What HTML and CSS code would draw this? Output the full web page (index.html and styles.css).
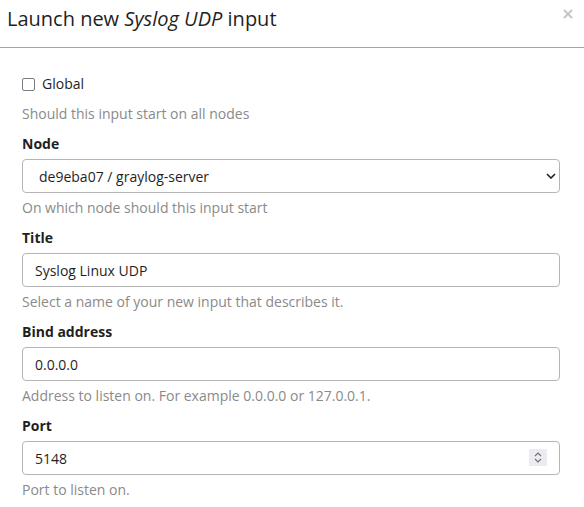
FILE: index.html
```html
<!DOCTYPE html>
<html>
<head>
<meta charset="utf-8">
<link rel="stylesheet" href="styles.css">
</head>
<body>
<div class="modal">
  <div class="modal-header">
    <h2 class="modal-title">Launch new <em>Syslog UDP</em> input</h2>
    <button class="close" type="button" aria-label="Close">
      <svg width="10" height="10" viewBox="0 0 10 10"><path d="M1 1L9 9M9 1L1 9" stroke="#c8c8c8" stroke-width="2.2" stroke-linecap="butt"/></svg>
    </button>
  </div>
  <div class="modal-body">
    <div class="field">
      <label class="check-row"><span class="checkbox"></span><span>Global</span></label>
      <div class="help">Should this input start on all nodes</div>
    </div>
    <div class="field">
      <label class="label">Node</label>
      <div class="control-wrap">
        <select class="control select"><option>de9eba07 / graylog-server</option></select>
        <svg class="chevron" width="10" height="6" viewBox="0 0 10 6"><path d="M1 1L5 5L9 1" fill="none" stroke="#222" stroke-width="1.6"/></svg>
      </div>
      <div class="help">On which node should this input start</div>
    </div>
    <div class="field">
      <label class="label">Title</label>
      <input class="control" type="text" value="Syslog Linux UDP">
      <div class="help">Select a name of your new input that describes it.</div>
    </div>
    <div class="field">
      <label class="label">Bind address</label>
      <input class="control" type="text" value="0.0.0.0">
      <div class="help">Address to listen on. For example 0.0.0.0 or 127.0.0.1.</div>
    </div>
    <div class="field">
      <label class="label">Port</label>
      <div class="control-wrap">
        <input class="control" type="text" value="5148">
        <span class="spinner">
          <svg width="18" height="17" viewBox="0 0 18 17"><path d="M6 7L9 4L12 7" fill="none" stroke="#6e6e78" stroke-width="1.1"/><path d="M6 10L9 13L12 10" fill="none" stroke="#6e6e78" stroke-width="1.1"/></svg>
        </span>
      </div>
      <div class="help">Port to listen on.</div>
    </div>
  </div>
</div>
</body>
</html>
```
FILE: styles.css
```css
html, body {
  margin: 0;
  padding: 0;
  background: #fff;
}
body {
  font-family: "Open Sans", "Noto Sans", sans-serif;
  font-size: 14px;
  color: #1f1f1f;
}
.modal {
  width: 584px;
}
.modal-header {
  display: flex;
  justify-content: space-between;
  align-items: flex-start;
  height: 47px;
  border-bottom: 1px solid #a5a5a5;
  padding: 0 11px 0 7px;
}
.modal-title {
  margin: 0;
  padding-top: 5px;
  font-size: 20px;
  line-height: 28px;
  font-weight: 400;
  color: #1f1f1f;
}
.modal-title em {
  font-style: italic;
}
.close {
  background: none;
  border: 0;
  padding: 0;
  margin-top: 9px;
  width: 10px;
  height: 10px;
  display: flex;
  cursor: pointer;
}
.modal-body {
  padding: 26px 24px 0 22px;
}
.field {
  display: flex;
  flex-direction: column;
  margin-bottom: 10px;
}
.check-row {
  display: flex;
  align-items: center;
  gap: 7px;
  height: 20px;
  margin-bottom: 10px;
  line-height: 20px;
}
.checkbox {
  box-sizing: border-box;
  width: 13px;
  height: 13px;
  border: 1.5px solid #7a7a86;
  border-radius: 2px;
  background: #fff;
}
.label {
  font-weight: 700;
  line-height: 20px;
  margin-bottom: 5px;
}
.help {
  color: #8a8a8a;
  line-height: 20px;
  margin-top: 5px;
}
.check-row + .help {
  margin-top: 0;
}
.control-wrap {
  position: relative;
  display: flex;
}
.control {
  box-sizing: border-box;
  width: 100%;
  height: 34px;
  border: 1px solid #b5b5b5;
  border-radius: 4px;
  background: #fff;
  font-family: "Open Sans", "Noto Sans", sans-serif;
  font-size: 14px;
  color: #1f1f1f;
  padding: 0 12px;
  margin: 0;
  outline: none;
}
.select {
  appearance: none;
  -webkit-appearance: none;
  padding-left: 16px;
}
.chevron {
  position: absolute;
  right: 4px;
  top: 14px;
}
.spinner {
  position: absolute;
  right: 13px;
  top: 8px;
  width: 18px;
  height: 17px;
  background: #ececf0;
  display: flex;
}
```
